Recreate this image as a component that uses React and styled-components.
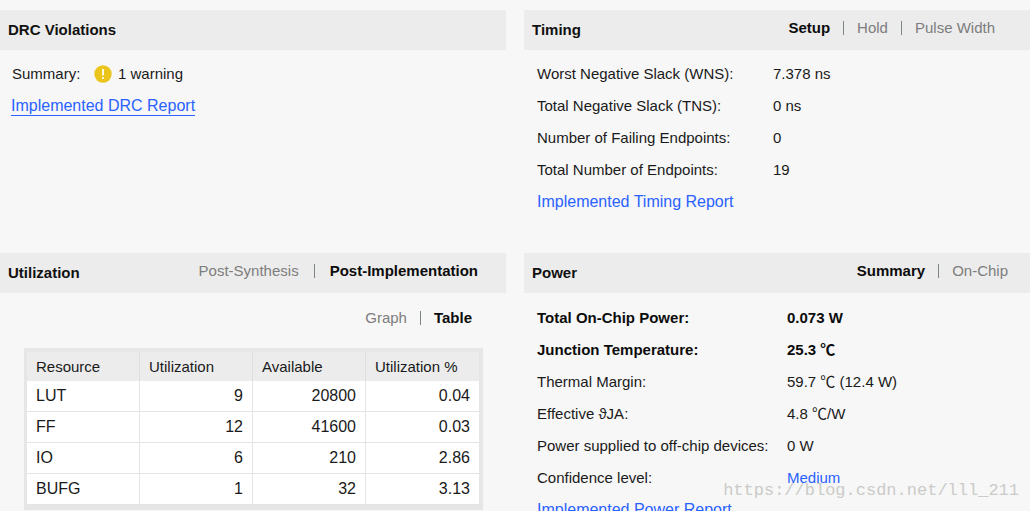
import React from "react";
import styled, { createGlobalStyle } from "styled-components";

const GlobalStyle = createGlobalStyle`
  * { box-sizing: border-box; }
  body {
    margin: 0;
    background: #f7f7f7;
    color: #1a1a1a;
    font: 15px/20px "Liberation Sans", Arial, "Noto Sans CJK SC", sans-serif;
  }
`;

const Dashboard = styled.main`
  position: relative;
  display: grid;
  grid-template-columns: 1fr 1fr;
  grid-auto-rows: max-content;
  gap: 35px 18px;
  height: 100vh;
  padding-top: 10px;
  overflow: hidden;
`;

const Panel = styled.section`
  min-width: 0;
`;

const PanelHeader = styled.header`
  display: flex;
  align-items: center;
  justify-content: space-between;
  height: 40px;
  padding: 0 ${(p) => p.$end || 0}px 0 8px;
  background: #ececec;
`;

const Title = styled.h2`
  margin: 0;
  font-size: 15px;
  line-height: 20px;
  font-weight: bold;
  color: #111;
`;

const Tabs = styled.div`
  display: flex;
  align-items: center;
  gap: ${(p) => p.$gap || 13}px;
  padding-bottom: 4px;
`;

const Tab = styled.button`
  padding: 0;
  border: 0;
  background: none;
  font: inherit;
  font-weight: ${(p) => (p.$active ? "bold" : "normal")};
  color: ${(p) => (p.$active ? "#0c0c0c" : "#7d7d7d")};
`;

const Divider = styled.span`
  width: 1px;
  height: 14px;
  background: #7d8488;
`;

const ViewTabs = styled.div`
  display: flex;
  justify-content: flex-end;
  padding: 15px 34px 16px 0;
`;

const Details = styled.dl`
  margin: 0;
  padding: ${(p) => p.$top}px 0 0 ${(p) => p.$start || 13}px;
`;

const Detail = styled.div`
  display: grid;
  grid-template-columns: ${(p) => p.$label}px 1fr;
  align-items: center;
  height: 32px;
  font-weight: ${(p) => (p.$strong ? "bold" : "normal")};
  color: ${(p) => (p.$strong ? "#0c0c0c" : "#1a1a1a")};
  white-space: nowrap;
`;

const Term = styled.dt``;

const Value = styled.dd`
  display: flex;
  align-items: center;
  gap: 6px;
  margin: 0;
`;

const ReportRow = styled.div`
  display: flex;
  align-items: center;
  height: 32px;
  padding-left: ${(p) => p.$start}px;
`;

const Link = styled.a`
  font-size: ${(p) => (p.$small ? 15 : 16)}px;
  line-height: 19px;
  color: #2962ff;
  text-decoration: none;
  border-bottom: 1px solid ${(p) => (p.$underlined ? "#2962ff" : "transparent")};
`;

const TableFrame = styled.div`
  margin: 0 23px 0 24px;
  border: solid #e6e6e6;
  border-width: 4px 4px 5px 3px;
`;

const ResourceTable = styled.table`
  width: 100%;
  table-layout: fixed;
  border-collapse: separate;
  border-spacing: 0;
  background: #fff;
`;

const HeadCell = styled.th`
  height: 29px;
  padding: 0 9px;
  background: #ececec;
  border-right: 1px solid #dfdfdf;
  font-weight: normal;
  text-align: left;
  white-space: nowrap;
  &:last-child { border-right: 0; }
`;

const Cell = styled.td`
  height: 31px;
  padding: 0 9px;
  border: solid #e4e4e4;
  border-width: 0 1px 1px 0;
  font-size: 16px;
  text-align: ${(p) => (p.$name ? "left" : "right")};
  &:last-child { border-right: 0; }
`;

const Watermark = styled.div`
  position: absolute;
  right: 11px;
  bottom: 10px;
  font: 17px/20px "Liberation Mono", monospace;
  color: #cbcbc8;
  pointer-events: none;
`;

const WarningIcon = () => (
  <svg width="18" height="18" viewBox="0 0 18 18" aria-hidden="true">
    <circle cx="9" cy="9" r="8.7" fill="#ecc51c" />
    <rect x="8" y="4" width="2" height="6.5" fill="#fff8dc" />
    <rect x="8" y="12" width="2" height="2" fill="#fff8dc" />
  </svg>
);

const TabList = ({ items, active, gap }) => (
  <Tabs $gap={gap}>
    {items.map((item, i) => (
      <React.Fragment key={item}>
        {i > 0 && <Divider />}
        <Tab type="button" $active={item === active}>{item}</Tab>
      </React.Fragment>
    ))}
  </Tabs>
);

const timing = [
  ["Worst Negative Slack (WNS):", "7.378 ns"],
  ["Total Negative Slack (TNS):", "0 ns"],
  ["Number of Failing Endpoints:", "0"],
  ["Total Number of Endpoints:", "19"],
];

const power = [
  ["Total On-Chip Power:", "0.073 W", true],
  ["Junction Temperature:", "25.3 ℃", true],
  ["Thermal Margin:", "59.7 ℃ (12.4 W)"],
  ["Effective ϑJA:", "4.8 ℃/W"],
  ["Power supplied to off-chip devices:", "0 W"],
];

const resources = [
  ["LUT", "9", "20800", "0.04"],
  ["FF", "12", "41600", "0.03"],
  ["IO", "6", "210", "2.86"],
  ["BUFG", "1", "32", "3.13"],
];

export default function App() {
  return (
    <>
      <GlobalStyle />
      <Dashboard>
        <Panel>
          <PanelHeader><Title>DRC Violations</Title></PanelHeader>
          <Details $top={8} $start={12}>
            <Detail $label={82}>
              <Term>Summary:</Term>
              <Value><WarningIcon />1 warning</Value>
            </Detail>
          </Details>
          <ReportRow $start={11}><Link href="#drc" $underlined>Implemented DRC Report</Link></ReportRow>
        </Panel>

        <Panel>
          <PanelHeader $end={35}>
            <Title>Timing</Title>
            <TabList items={["Setup", "Hold", "Pulse Width"]} active="Setup" />
          </PanelHeader>
          <Details $top={8}>
            {timing.map(([label, value]) => (
              <Detail key={label} $label={236}>
                <Term>{label}</Term>
                <Value>{value}</Value>
              </Detail>
            ))}
          </Details>
          <ReportRow $start={13}><Link href="#timing">Implemented Timing Report</Link></ReportRow>
        </Panel>

        <Panel>
          <PanelHeader $end={28}>
            <Title>Utilization</Title>
            <TabList items={["Post-Synthesis", "Post-Implementation"]} active="Post-Implementation" gap={15} />
          </PanelHeader>
          <ViewTabs><TabList items={["Graph", "Table"]} active="Table" /></ViewTabs>
          <TableFrame>
            <ResourceTable>
              <thead>
                <tr>
                  {["Resource", "Utilization", "Available", "Utilization %"].map((name) => (
                    <HeadCell key={name} scope="col">{name}</HeadCell>
                  ))}
                </tr>
              </thead>
              <tbody>
                {resources.map((row) => (
                  <tr key={row[0]}>
                    {row.map((value, i) => <Cell key={i} $name={i === 0}>{value}</Cell>)}
                  </tr>
                ))}
              </tbody>
            </ResourceTable>
          </TableFrame>
        </Panel>

        <Panel>
          <PanelHeader $end={22}>
            <Title>Power</Title>
            <TabList items={["Summary", "On-Chip"]} active="Summary" />
          </PanelHeader>
          <Details $top={9}>
            {power.map(([label, value, strong]) => (
              <Detail key={label} $label={250} $strong={strong}>
                <Term>{label}</Term>
                <Value>{value}</Value>
              </Detail>
            ))}
            <Detail $label={250}>
              <Term>Confidence level:</Term>
              <Value><Link href="#confidence" $small>Medium</Link></Value>
            </Detail>
          </Details>
          <ReportRow $start={13}><Link href="#power">Implemented Power Report</Link></ReportRow>
        </Panel>
        <Watermark>https://blog.csdn.net/lll_211</Watermark>
      </Dashboard>
    </>
  );
}
